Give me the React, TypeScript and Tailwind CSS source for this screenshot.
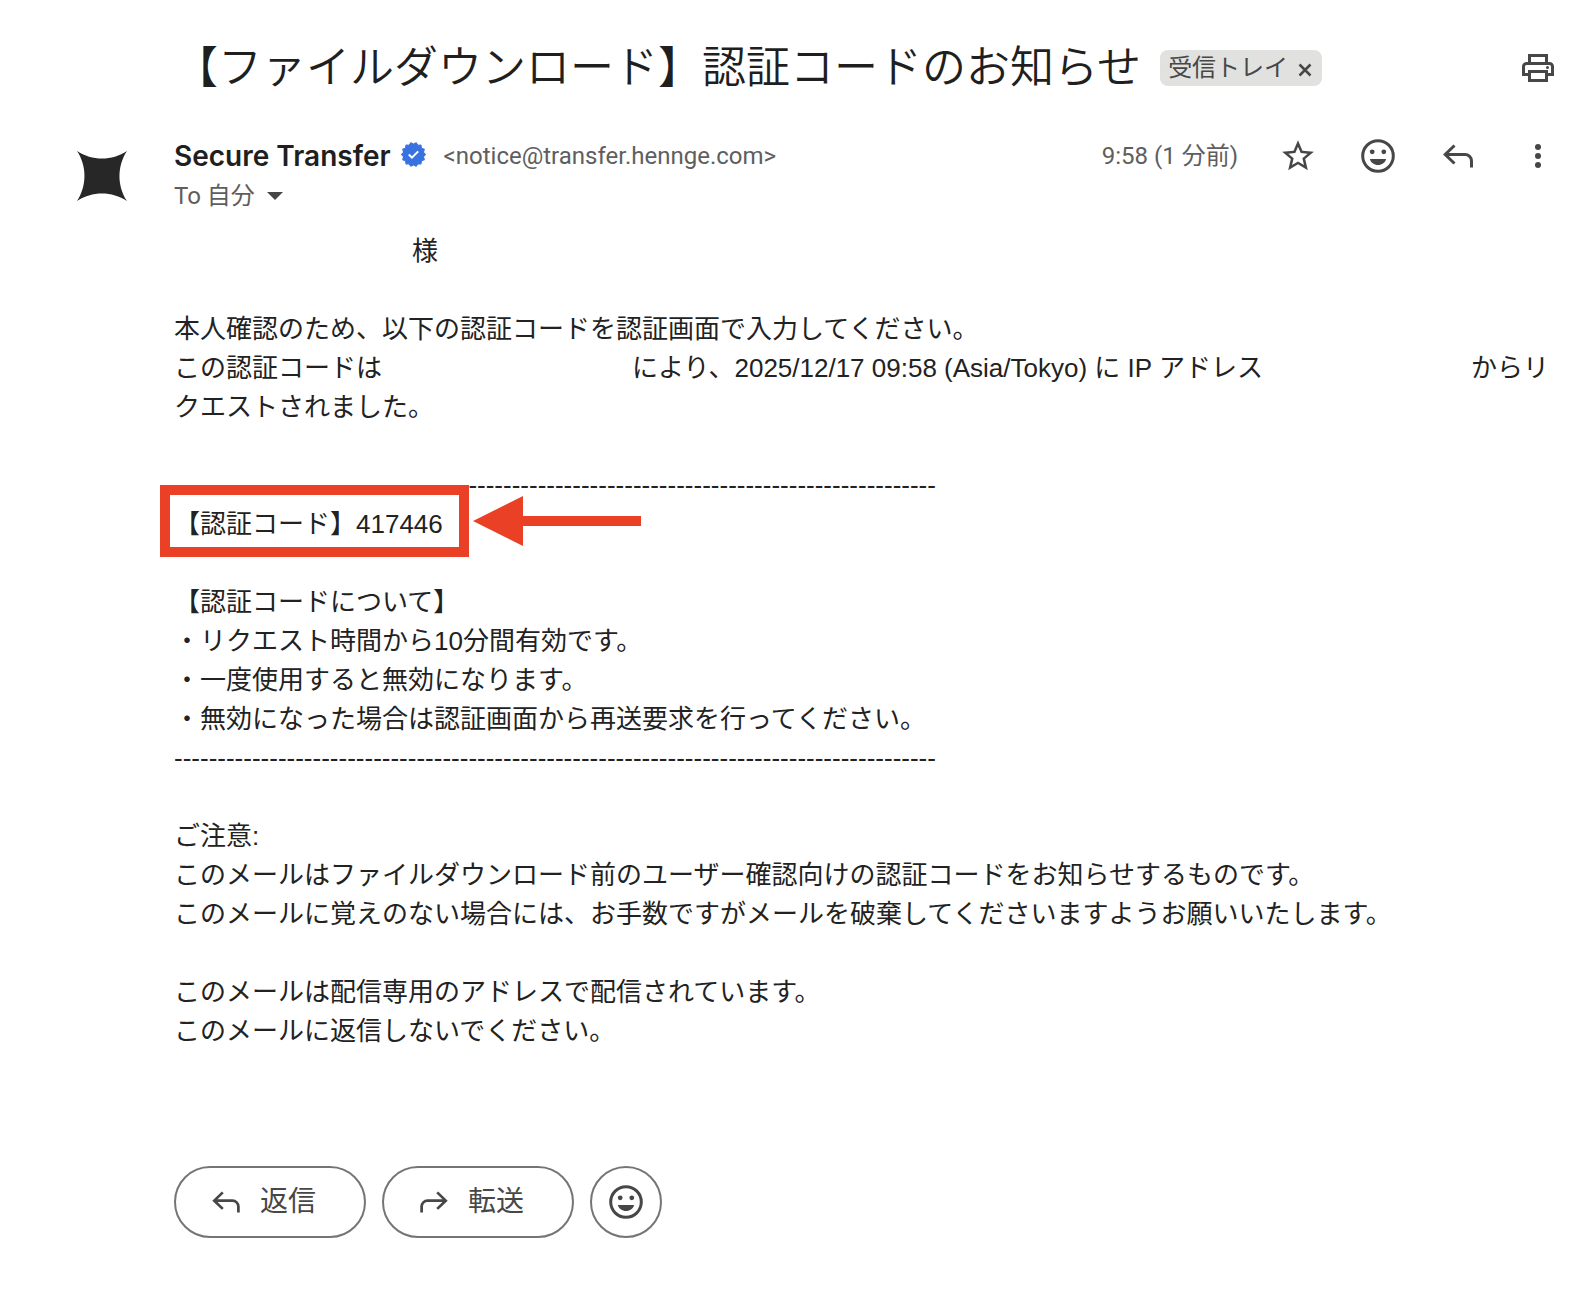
import type { ReactNode } from "react";

const DASHES = "-".repeat(88);

// Scalloped outline of the verified badge
const BADGE_POINTS = Array.from({ length: 28 }, (_, i) => {
  const radius = i % 2 === 0 ? 11.5 : 9.8;
  const angle = (i * Math.PI) / 14;
  return `${(12 + radius * Math.cos(angle)).toFixed(2)},${(12 + radius * Math.sin(angle)).toFixed(2)}`;
}).join(" ");

type IconProps = { className?: string };

function PrintIcon({ className }: IconProps) {
  return (
    <svg viewBox="0 0 32 28" className={className} fill="none" stroke="currentColor" strokeWidth="3" aria-hidden="true">
      <path d="M7.5 9V1.5h17V9" />
      <path d="M7 20.5H1.5V12.500a3 3 0 0 1 3-3h23a3 3 0 0 1 3 3V20.500H25" />
      <path d="M7.5 17.5h17v9h-17z" />
      <circle cx="25.5" cy="13.5" r="1.5" fill="currentColor" stroke="none" />
    </svg>
  );
}

function StarIcon({ className }: IconProps) {
  return (
    <svg viewBox="0 0 24 24" className={className} fill="currentColor" aria-hidden="true">
      <path d="M22 9.240l-7.190-.620L12 2 9.190 8.630 2 9.240l5.460 4.730L5.820 21 12 17.270 18.180 21l-1.630-7.030L22 9.240zM12 15.400l-3.760 2.270 1-4.280-3.320-2.880 4.380-.380L12 6.100l1.710 4.040 4.380.380-3.320 2.880 1 4.280L12 15.400z" />
    </svg>
  );
}

function SmileIcon({ className }: IconProps) {
  return (
    <svg viewBox="0 0 34 34" className={className} aria-hidden="true">
      <circle cx="17" cy="17" r="15.3" fill="none" stroke="currentColor" strokeWidth="3" />
      <circle cx="11.2" cy="12.8" r="2.4" fill="currentColor" />
      <circle cx="22.8" cy="12.8" r="2.4" fill="currentColor" />
      <path d="M8.8 20h16.400c-1 3.600-4.200 6-8.200 6s-7.200-2.400-8.200-6z" fill="currentColor" />
    </svg>
  );
}

function ReplyIcon({ className }: IconProps) {
  return (
    <svg viewBox="0 0 30 24" className={className} fill="none" stroke="currentColor" strokeWidth="3" aria-hidden="true">
      <path d="M11.500 1.500 2.200 10.500l9.300 9" />
      <path d="M2.500 10.500H22a6.500 6.500 0 0 1 6.500 6.500v6.500" />
    </svg>
  );
}

function MoreIcon({ className }: IconProps) {
  return (
    <svg viewBox="0 0 6 24" className={className} fill="currentColor" aria-hidden="true">
      <circle cx="3" cy="3" r="3" />
      <circle cx="3" cy="12" r="3" />
      <circle cx="3" cy="21" r="3" />
    </svg>
  );
}

function VerifiedIcon({ className }: IconProps) {
  return (
    <svg viewBox="0 0 24 24" className={className} aria-hidden="true">
      <polygon points={BADGE_POINTS} fill="#3871e0" stroke="#3871e0" strokeLinejoin="round" />
      <path d="M7.5 12l3 3 6-6" fill="none" stroke="#fff" strokeWidth="2" />
    </svg>
  );
}

function SenderLogo({ className }: IconProps) {
  return (
    <svg viewBox="0 0 50 50" className={className} fill="#272727" aria-hidden="true">
      <path d="M0 0c15 10 35 10 50 0c-10 15-10 35 0 50c-15-10-35-10-50 0c10-15 10-35 0-50z" />
    </svg>
  );
}

function IconButton({ label, children }: { label: string; children: ReactNode }) {
  return (
    <button type="button" aria-label={label} className="flex size-10 items-center justify-center">
      {children}
    </button>
  );
}

function PillButton({ icon, children }: { icon: ReactNode; children: ReactNode }) {
  return (
    <button
      type="button"
      className="flex h-18 w-48 items-center gap-5 rounded-full border-2 border-[#757575] pl-9 text-[28px]"
    >
      {icon}
      {children}
    </button>
  );
}

// Blank run where a personal value has been removed
function Redacted({ className }: IconProps) {
  return <span className={`inline-block ${className}`} />;
}

function Subject() {
  return (
    <div className="flex items-center pr-[37px] pl-[174px]">
      <h1 className="text-[44px] leading-[60px] font-[350] text-[#1f1f1f]">【ファイルダウンロード】認証コードのお知らせ</h1>
      <div className="ml-[19px] flex h-9 items-center gap-2 rounded-lg bg-[#e1e1e0] px-2 text-2xl">
        <span>受信トレイ</span>
        <button type="button" aria-label="ラベルを削除" className="flex size-[18px] items-center justify-center">
          <svg viewBox="0 0 14 14" className="mt-1 size-[14px]" stroke="currentColor" strokeWidth="2.5" aria-hidden="true">
            <path d="M1.500 1.500l11 11M12.500 1.500l-11 11" />
          </svg>
        </button>
      </div>
      <div className="ml-auto -mr-1">
        <IconButton label="印刷">
          <PrintIcon className="h-7 w-8" />
        </IconButton>
      </div>
    </div>
  );
}

function SenderBar() {
  return (
    <div className="flex items-start pr-[33px]">
      <div className="flex w-[174px] shrink-0 pt-[15px] pl-[77px]">
        <SenderLogo className="size-[50px]" />
      </div>
      <div className="flex flex-1 flex-col">
        <div className="flex h-10 items-center">
          <span className="font-['Inter','Noto_Sans_CJK_JP',sans-serif] text-[28px] font-semibold text-[#1f1f1f]">
            Secure Transfer
          </span>
          <VerifiedIcon className="mb-1 ml-[10px] size-[25px]" />
          <span className="ml-[18px] text-2xl text-[#5e5e5e]">&lt;notice@transfer.hennge.com&gt;</span>
        </div>
        <button type="button" className="flex h-10 items-center gap-3 self-start text-2xl text-[#5e5e5e]">
          To 自分
          <svg viewBox="0 0 16 8" className="h-2 w-4" fill="#474747" aria-hidden="true">
            <path d="M0 0h16l-8 8z" />
          </svg>
        </button>
      </div>
      <div className="flex h-10 items-center gap-10">
        <span className="text-2xl text-[#5e5e5e]">9:58 (1 分前)</span>
        <IconButton label="スター">
          <StarIcon className="size-[38px]" />
        </IconButton>
        <IconButton label="リアクションを追加">
          <SmileIcon className="size-[34px]" />
        </IconButton>
        <IconButton label="返信">
          <ReplyIcon className="h-6 w-[30px]" />
        </IconButton>
        <IconButton label="その他">
          <MoreIcon className="h-6 w-[6px]" />
        </IconButton>
      </div>
    </div>
  );
}

function VerificationCode() {
  return (
    <div className="relative">
      <p>【認証コード】417446</p>
      <div className="absolute -top-5 -left-[14px] h-18 w-[309px] border-10 border-[#ea4025]" />
      <svg viewBox="0 0 168 50" className="absolute -top-[9px] left-[299px] h-[50px] w-[168px]" fill="#ea4025" aria-hidden="true">
        <path d="M0 25L50 0v20h118v10H50v20z" />
      </svg>
    </div>
  );
}

function MailBody() {
  return (
    <div className="flex flex-col gap-[39px] pr-[42px] pl-[174px] font-['Liberation_Sans','Noto_Sans_CJK_JP',sans-serif] text-[26px] leading-[39px] text-[#222222]">
      <p>
        <Redacted className="w-[238px]" />様
      </p>
      <div>
        <p>本人確認のため、以下の認証コードを認証画面で入力してください。</p>
        <p>
          この認証コードは
          <Redacted className="w-[250px]" />
          により、2025/12/17 09:58 (Asia/Tokyo) に IP アドレス
          <Redacted className="w-[208px]" />
          <span>からリ</span>
          <span>クエストされました。</span>
        </p>
      </div>
      <div>
        <p>{DASHES}</p>
        <VerificationCode />
      </div>
      <div>
        <p>【認証コードについて】</p>
        <p>・リクエスト時間から10分間有効です。</p>
        <p>・一度使用すると無効になります。</p>
        <p>・無効になった場合は認証画面から再送要求を行ってください。</p>
        <p>{DASHES}</p>
      </div>
      <div>
        <p>ご注意:</p>
        <p>このメールはファイルダウンロード前のユーザー確認向けの認証コードをお知らせするものです。</p>
        <p>このメールに覚えのない場合には、お手数ですがメールを破棄してくださいますようお願いいたします。</p>
      </div>
      <div>
        <p>このメールは配信専用のアドレスで配信されています。</p>
        <p>このメールに返信しないでください。</p>
      </div>
    </div>
  );
}

export default function App() {
  return (
    <main
      lang="ja"
      className="min-h-screen bg-white pt-[38px] font-['Roboto','Noto_Sans_CJK_JP',sans-serif] text-[#474747]"
    >
      <Subject />
      <div className="pt-[38px]">
        <SenderBar />
      </div>
      <div className="pt-4">
        <MailBody />
      </div>
      <div className="flex gap-4 pt-[115px] pb-16 pl-[174px]">
        <PillButton icon={<ReplyIcon className="h-[22px] w-7" />}>返信</PillButton>
        <PillButton icon={<ReplyIcon className="h-[22px] w-7 -scale-x-100" />}>転送</PillButton>
        <button
          type="button"
          aria-label="リアクションを追加"
          className="flex size-18 items-center justify-center rounded-full border-2 border-[#757575]"
        >
          <SmileIcon className="size-[34px]" />
        </button>
      </div>
    </main>
  );
}
